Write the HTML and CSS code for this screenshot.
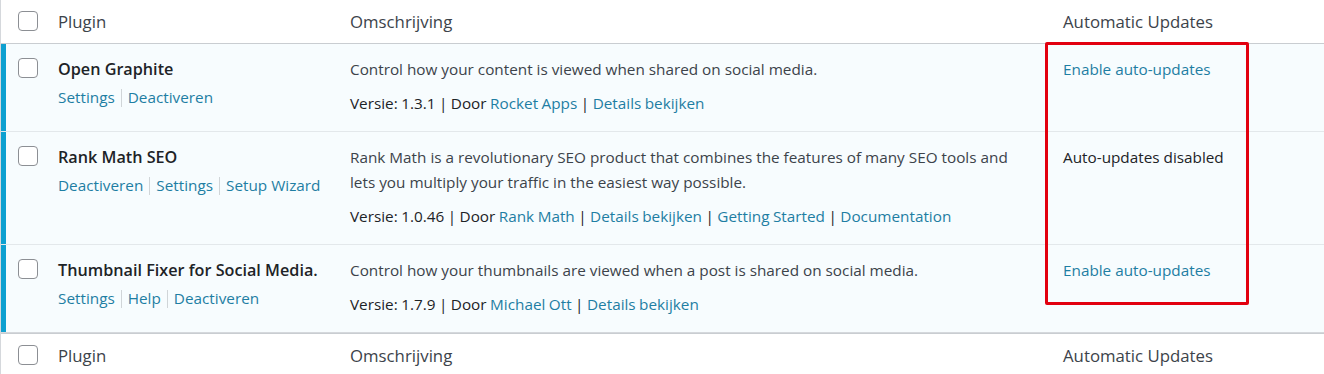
FILE: index.html
```html
<!DOCTYPE html>
<html lang="nl">
<head>
<meta charset="utf-8">
<title>Plugins</title>
<link rel="stylesheet" href="styles.css">
</head>
<body>
<div class="wrap">
<table class="plugins">
  <colgroup>
    <col class="c-check">
    <col class="c-name">
    <col class="c-desc">
    <col class="c-auto">
  </colgroup>
  <thead>
    <tr>
      <td class="check"><span class="box"></span></td>
      <th class="name">Plugin</th>
      <th class="desc">Omschrijving</th>
      <th class="auto">Automatic Updates</th>
    </tr>
  </thead>
  <tbody>
    <tr class="active">
      <td class="check"><span class="box"></span></td>
      <td class="name">
        <div class="title">Open Graphite</div>
        <div class="actions"><a>Settings</a><span class="sep"></span><a>Deactiveren</a></div>
      </td>
      <td class="desc">
        <p class="text">Control how your content is viewed when shared on social media.</p>
        <p class="meta">Versie: 1.3.1 | Door <a>Rocket Apps</a> | <a>Details bekijken</a></p>
      </td>
      <td class="auto"><a>Enable auto-updates</a></td>
    </tr>
    <tr class="active">
      <td class="check"><span class="box"></span></td>
      <td class="name">
        <div class="title">Rank Math SEO</div>
        <div class="actions"><a>Deactiveren</a><span class="sep"></span><a>Settings</a><span class="sep"></span><a>Setup Wizard</a></div>
      </td>
      <td class="desc">
        <p class="text">Rank Math is a revolutionary SEO product that combines the features of many SEO tools and lets you multiply your traffic in the easiest way possible.</p>
        <p class="meta">Versie: 1.0.46 | Door <a>Rank Math</a> | <a>Details bekijken</a> | <a>Getting Started</a> | <a>Documentation</a></p>
      </td>
      <td class="auto"><span class="plain">Auto-updates disabled</span></td>
    </tr>
    <tr class="active last">
      <td class="check"><span class="box"></span></td>
      <td class="name">
        <div class="title">Thumbnail Fixer for Social Media.</div>
        <div class="actions"><a>Settings</a><span class="sep"></span><a>Help</a><span class="sep"></span><a>Deactiveren</a></div>
      </td>
      <td class="desc">
        <p class="text">Control how your thumbnails are viewed when a post is shared on social media.</p>
        <p class="meta">Versie: 1.7.9 | Door <a>Michael Ott</a> | <a>Details bekijken</a></p>
      </td>
      <td class="auto"><a>Enable auto-updates</a></td>
    </tr>
  </tbody>
  <tfoot>
    <tr>
      <td class="check"><span class="box"></span></td>
      <th class="name">Plugin</th>
      <th class="desc">Omschrijving</th>
      <th class="auto">Automatic Updates</th>
    </tr>
  </tfoot>
</table>
<div class="highlight"></div>
</div>
</body>
</html>
```

FILE: styles.css
```css
html, body {
  margin: 0;
  padding: 0;
  background: #ffffff;
  overflow: hidden;
}
body {
  font-family: "Open Sans", "Noto Sans", sans-serif;
  color: #32373c;
}
.wrap {
  position: relative;
  width: 1324px;
  height: 374px;
  overflow: hidden;
}
.plugins {
  width: 1340px;
  border-collapse: separate;
  border-spacing: 0;
  table-layout: fixed;
  border-left: 1px solid #d5d8dc;
}
.c-check { width: 57px; }
.c-name { width: 292px; }
.c-desc { width: 713px; }
.plugins th, .plugins td {
  text-align: left;
  vertical-align: top;
  padding: 0;
}
thead th, tfoot th {
  font-weight: normal;
  font-size: 16.8px;
  color: #3c434a;
}
thead th {
  line-height: 43px;
  height: 43px;
}
tfoot th {
  line-height: 43px;
  height: 43px;
}
thead td, thead th {
  border-bottom: 1px solid #c9cdd1;
}
tfoot td, tfoot th {
  border-top: 1px solid #c9cdd1;
}
thead .check { padding-top: 11px; padding-left: 17px; height: 32px; }
tfoot .check { padding-top: 11px; padding-left: 17px; height: 32px; }
.name { padding-left: 13px; }
.desc { padding-left: 12px; }
.auto { padding-left: 12px; }

.box {
  display: block;
  width: 18px;
  height: 18px;
  border: 1px solid #8c8f94;
  border-radius: 4px;
  background: #ffffff;
  box-sizing: content-box;
}

tbody tr.active td {
  background: #f7fcfe;
  border-bottom: 1px solid #e3e8eb;
}
tbody tr.last td { border-bottom: 1px solid #d5d8dc; }
tbody tr.active td.check {
  box-shadow: inset 5px 0 0 #0ea0d0;
  padding-top: 14px;
  padding-left: 17px;
}
tbody td.name, tbody td.desc, tbody td.auto {
  padding-top: 13px;
  padding-bottom: 15px;
}
.title {
  font-weight: 600;
  font-size: 16.2px;
  line-height: 25px;
  color: #1d2327;
}
.actions {
  font-size: 15.3px;
  line-height: 25px;
  margin-top: 3px;
  display: flex;
  align-items: center;
}
.actions .sep {
  display: inline-block;
  width: 1px;
  height: 18px;
  background: #d0d5d8;
  margin: 0 6px;
}
a {
  color: #1e7ea3;
  text-decoration: none;
}
.text, .meta {
  margin: 0;
  font-size: 15.3px;
  line-height: 25px;
  color: #3c434a;
}
.text { max-width: 670px; }
.meta {
  margin-top: 9px;
  color: #1d2327;
  word-spacing: -0.5px;
}
.auto a, .auto .plain {
  font-size: 15.3px;
  line-height: 25px;
}
.auto .plain { color: #1d2327; }

.highlight {
  position: absolute;
  left: 1045px;
  top: 42px;
  width: 198px;
  height: 257px;
  border: 3px solid #e2000f;
  border-radius: 2px;
}
```
